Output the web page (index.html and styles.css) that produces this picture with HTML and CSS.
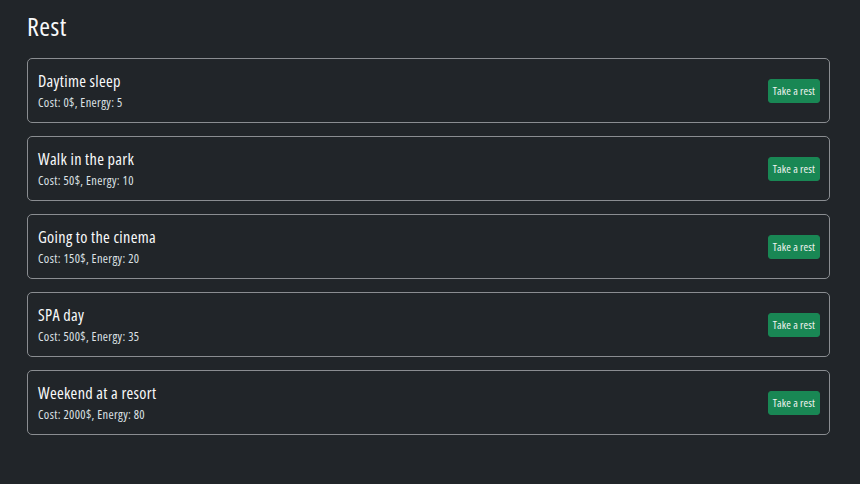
FILE: index.html
```html
<!DOCTYPE html>
<html lang="en">
<head>
<meta charset="utf-8">
<title>Rest</title>
<link rel="stylesheet" href="styles.css">
</head>
<body>
<main class="page">
  <h1 class="title">Rest</h1>
  <ul class="list">
    <li class="card">
      <div class="info"><h2 class="name">Daytime sleep</h2><p class="meta">Cost: 0$, Energy: 5</p></div>
      <button class="btn">Take a rest</button>
    </li>
    <li class="card">
      <div class="info"><h2 class="name">Walk in the park</h2><p class="meta">Cost: 50$, Energy: 10</p></div>
      <button class="btn">Take a rest</button>
    </li>
    <li class="card">
      <div class="info"><h2 class="name">Going to the cinema</h2><p class="meta">Cost: 150$, Energy: 20</p></div>
      <button class="btn">Take a rest</button>
    </li>
    <li class="card">
      <div class="info"><h2 class="name">SPA day</h2><p class="meta">Cost: 500$, Energy: 35</p></div>
      <button class="btn">Take a rest</button>
    </li>
    <li class="card">
      <div class="info"><h2 class="name">Weekend at a resort</h2><p class="meta">Cost: 2000$, Energy: 80</p></div>
      <button class="btn">Take a rest</button>
    </li>
  </ul>
</main>
</body>
</html>
```
FILE: styles.css
```css
html, body {
  margin: 0;
  background: #212529;
  color: #dee2e6;
  font-family: "Open Sans", "Liberation Sans", sans-serif;
  font-stretch: 75%;
}
.page {
  padding: 11px 30px 0 27px;
}
.title {
  margin: 0 0 17px;
  font-size: 26px;
  font-weight: 500;
  letter-spacing: 0.5px;
  line-height: 30px;
  color: #f8f9fa;
}
.list {
  list-style: none;
  margin: 0;
  padding: 0;
  display: flex;
  flex-direction: column;
  gap: 13px;
}
.card {
  display: flex;
  align-items: center;
  justify-content: space-between;
  height: 63px;
  padding: 0 9px 0 10px;
  border: 1px solid #8a8d91;
  border-radius: 5px;
}
.name {
  margin: 0 0 5px;
  font-size: 16.3px;
  font-weight: 500;
  letter-spacing: 0.3px;
  line-height: 20px;
  color: #f8f9fa;
}
.meta {
  margin: 0;
  font-size: 12.4px;
  letter-spacing: 0.35px;
  line-height: 14px;
  color: #dee2e6;
}
.btn {
  background: #198754;
  color: #f1f4f2;
  border: 1px solid #198754;
  border-radius: 3px;
  font-family: inherit;
  font-stretch: 75%;
  font-size: 11.2px;
  letter-spacing: 0.1px;
  height: 24px;
  padding: 0 4px;
}
```
